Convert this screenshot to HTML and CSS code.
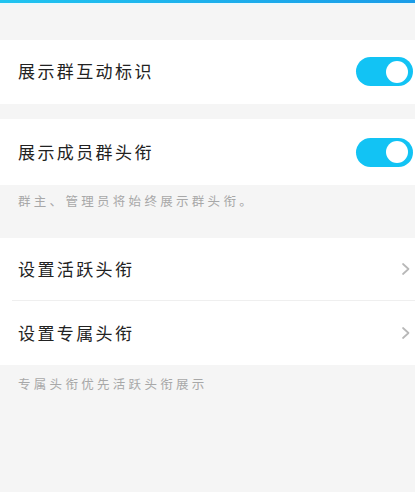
FILE: index.html
```html
<!DOCTYPE html>
<html lang="zh-CN">
<head>
<meta charset="utf-8">
<link rel="stylesheet" href="styles.css">
</head>
<body>
<div class="topbar"></div>
<div class="page">
  <div class="group first">
    <div class="row r1">
      <span class="label">展示群互动标识</span>
      <span class="toggle"><span class="knob"></span></span>
    </div>
  </div>
  <div class="group second">
    <div class="row r2">
      <span class="label">展示成员群头衔</span>
      <span class="toggle"><span class="knob"></span></span>
    </div>
  </div>
  <div class="caption c1">群主、管理员将始终展示群头衔。</div>
  <div class="group">
    <div class="row r3 divided">
      <span class="label">设置活跃头衔</span>
      <svg class="chev" width="10" height="14" viewBox="0 0 10 14"><path d="M2 2 L7.5 7 L2 12" fill="none" stroke="#b8b8b8" stroke-width="1.7" stroke-linecap="round" stroke-linejoin="round"/></svg>
    </div>
    <div class="row r4">
      <span class="label">设置专属头衔</span>
      <svg class="chev" width="10" height="14" viewBox="0 0 10 14"><path d="M2 2 L7.5 7 L2 12" fill="none" stroke="#b8b8b8" stroke-width="1.7" stroke-linecap="round" stroke-linejoin="round"/></svg>
    </div>
  </div>
  <div class="caption c2">专属头衔优先活跃头衔展示</div>
</div>
</body>
</html>
```
FILE: styles.css
```css
html, body {
  margin: 0;
  padding: 0;
  background: #f5f5f5;
  font-family: "Noto Sans CJK SC", "Noto Sans", sans-serif;
}
.topbar {
  height: 3px;
  background: linear-gradient(90deg, #20c4f0, #1a9ce8);
  border-bottom: 2px solid #eaf8fd;
}
.page {
  padding-top: 35px;
}
.group {
  background: #fff;
}
.second {
  margin-top: 15px;
}
.row {
  display: flex;
  align-items: center;
  justify-content: space-between;
  padding: 0 2px 0 18px;
  position: relative;
}
.r1 { height: 63px; padding-bottom: 1px; box-sizing: content-box; }
.r2 { height: 66px; }
.r3 { height: 62px; margin-bottom: 1px; }
.r4 { height: 64px; }
.divided::after {
  content: "";
  position: absolute;
  left: 12px;
  right: 0;
  bottom: -1px;
  height: 1px;
  background: #efefef;
}
.label {
  font-size: 17px;
  letter-spacing: 2.4px;
  color: #222;
  position: relative;
  top: -1px;
}
.toggle {
  width: 57px;
  height: 29px;
  border-radius: 15px;
  background: #12c3f4;
  display: flex;
  align-items: center;
  justify-content: flex-end;
  padding-right: 5px;
  box-sizing: border-box;
}
.knob {
  width: 22px;
  height: 22px;
  border-radius: 50%;
  background: #fff;
}
.chev {
  margin-right: 2px;
}
.caption {
  font-size: 12.5px;
  letter-spacing: 3.3px;
  color: #a8a8a8;
  padding-left: 18px;
}
.c1 {
  height: 53px;
  line-height: 20px;
  padding-top: 6px;
  box-sizing: border-box;
}
.c2 {
  padding-top: 9px;
  line-height: 20px;
}
```
